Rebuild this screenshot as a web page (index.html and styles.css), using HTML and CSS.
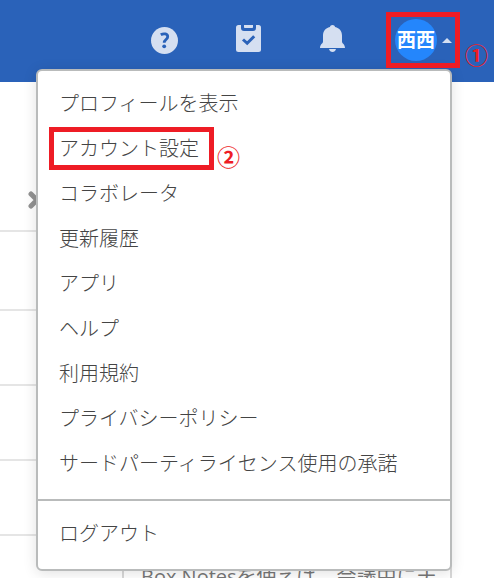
FILE: index.html
```
<!DOCTYPE html>
<html lang="ja">
  <head>
    <title>アカウント設定</title>
    <meta charset="utf-8">
    <meta name="viewport" content="width=device-width, initial-scale=1">
    <link rel="stylesheet" href="styles.css">
  </head>

  <body>
    <header class="header">
      <button class="icon-button" type="button" aria-label="ヘルプ">
        <svg viewBox="0 0 28 28" width="28" height="28">
          <circle cx="13.500" cy="14.500" r="13.500" fill="#d5dff1"/>
          <path d="M9.800 8.800c2.800-1.700 6.900-1.200 6.900 1.900 0 2.800-3.400 2.900-3.500 6" fill="none" stroke="#2a62b9" stroke-width="2.800"/>
          <circle cx="13.200" cy="20.300" r="1.900" fill="#2a62b9"/>
        </svg>
      </button>
      <button class="icon-button raised" type="button" aria-label="タスク">
        <svg viewBox="0 0 28 28" width="28" height="28">
          <rect x="1" y="1" width="25" height="27" rx="2.500" fill="#d5dff1"/>
          <path d="M6 0h15v4a3 3 0 0 1-3 3H9a3 3 0 0 1-3-3z" fill="#2a62b9"/>
          <path d="M9 1h9v2.200a.8.8 0 0 1-.8.8H9.800a.8.8 0 0 1-.8-.8z" fill="#d5dff1"/>
          <path d="M8 15.500l4.200 3.800 7-7" fill="none" stroke="#2a62b9" stroke-width="3"/>
        </svg>
      </button>
      <button class="icon-button raised" type="button" aria-label="通知">
        <svg viewBox="0 0 28 28" width="28" height="28">
          <path d="M13.500 1c1.400 0 2.300.8 2.600 1.900 4.500 1 6.900 4.300 6.900 8.600v6c0 2.200 3 2.600 3 6.500H1c0-3.900 3-4.300 3-6.500v-6c0-4.300 2.400-7.600 6.900-8.600.3-1.100 1.200-1.900 2.600-1.900z" fill="#d5dff1"/>
          <path d="M10 25h7c-.5 1.900-1.800 3-3.500 3s-3-1.100-3.500-3z" fill="#d5dff1"/>
        </svg>
      </button>
      <button class="account" type="button" aria-label="アカウント">
        <span class="avatar">西西</span>
        <span class="caret"></span>
      </button>
      <span class="step step-one">①</span>

      <nav class="menu">
        <ul>
          <li><a href="#">プロフィールを表示</a></li>
          <li class="marked"><a href="#">アカウント設定</a><span class="step step-two">②</span></li>
          <li><a href="#">コラボレータ</a></li>
          <li><a href="#">更新履歴</a></li>
          <li><a href="#">アプリ</a></li>
          <li><a href="#">ヘルプ</a></li>
          <li><a href="#">利用規約</a></li>
          <li><a href="#">プライバシーポリシー</a></li>
          <li><a href="#">サードパーティライセンス使用の承諾</a></li>
        </ul>
        <ul class="logout">
          <li><a href="#">ログアウト</a></li>
        </ul>
      </nav>
    </header>

    <main class="main">
      <div class="list">
        <div class="row row-first">
          <button class="close" type="button" aria-label="閉じる">
            <svg viewBox="0 0 18 18" width="18" height="18">
              <path d="M3 3l12 12M15 3L3 15" stroke="#929292" stroke-width="5" stroke-linecap="round"/>
            </svg>
          </button>
        </div>
        <div class="row row-second"></div>
        <div class="row"></div>
        <div class="row"></div>
        <div class="row"></div>
      </div>
      <section class="card">
        <p>Box Notesを使えば、会議中にチ</p>
      </section>
    </main>
  </body>
</html>
```
FILE: styles.css
```
* {
  box-sizing: border-box;
  margin: 0;
  padding: 0;
}

body {
  height: 100vh;
  overflow: hidden;
  background-color: #fff;
  color: #555;
  font-family: "Open Sans", "Noto Sans CJK JP", sans-serif;
  font-size: 20px;
}

button {
  border: 0;
  background: none;
  font-family: inherit;
}

svg {
  display: block;
}

.header {
  position: relative;
  display: flex;
  align-items: center;
  justify-content: flex-end;
  gap: 56px;
  height: 82px;
  padding: 0 34px 2px;
  background-color: #2a62b9;
}

.icon-button.raised {
  padding-bottom: 4px;
}

.account {
  position: relative;
  z-index: 2;
  display: flex;
  align-items: center;
  gap: 5px;
  height: 56px;
  margin-left: -17px;
  padding: 0 3px 0 4px;
  border: 5px solid #ee1c25;
}

.avatar {
  width: 42px;
  height: 42px;
  border-radius: 50%;
  background-color: #2486fc;
  color: #fff;
  font-family: "Noto Sans CJK JP", sans-serif;
  font-size: 19px;
  font-weight: 700;
  line-height: 40px;
  text-align: center;
}

.caret {
  border: 5px solid transparent;
  border-top: 0;
  border-bottom-color: #d5dff1;
}

.step {
  position: absolute;
  color: #ee1c25;
  font-family: "Noto Sans CJK JP", sans-serif;
  font-size: 23px;
  font-weight: 700;
  line-height: 24px;
}

.step-one {
  top: 42px;
  right: 6px;
}

/* menu */
.menu {
  position: absolute;
  z-index: 1;
  top: 69px;
  left: 36px;
  right: 42px;
  padding: 9px 0 14px;
  border: 2px solid #b9bbbb;
  border-radius: 6px;
  background-color: #fff;
  box-shadow: 0 2px 14px rgba(0, 0, 0, 0.12);
}

.menu ul {
  padding-left: 21px;
  list-style: none;
}

.menu a {
  color: #444;
  font-family: "Noto Sans CJK JP", sans-serif;
  font-weight: 300;
  line-height: 45px;
  text-decoration: none;
}

.menu li {
  height: 45px;
}

.menu .logout {
  margin-top: 14px;
  padding-top: 9px;
  border-top: 2px solid #b9bbbb;
}

.marked {
  position: relative;
}

.marked::before {
  content: "";
  position: absolute;
  box-sizing: border-box;
  top: 2px;
  left: -10px;
  width: 165px;
  height: 43px;
  border: 5px solid #ee1c25;
}

.step-two {
  top: 19px;
  left: 158px;
}

/* page behind the menu */
.main {
  display: flex;
  align-items: flex-start;
  gap: 42px;
  padding-right: 42px;
}

.list {
  flex: 0 0 80px;
}

.row {
  height: 75px;
  border-bottom: 2px solid #e5e5e5;
}

.row-first {
  height: 150px;
  padding: 109px 0 0 28px;
}

.row-second {
  height: 79px;
}

.close {
  display: block;
}

.card {
  flex: 1;
  min-width: 0;
  padding: 479px 17px 0;
  border: 2px solid #d8d8d8;
  white-space: nowrap;
}

.card p {
  color: #777;
  line-height: 28px;
}
```
